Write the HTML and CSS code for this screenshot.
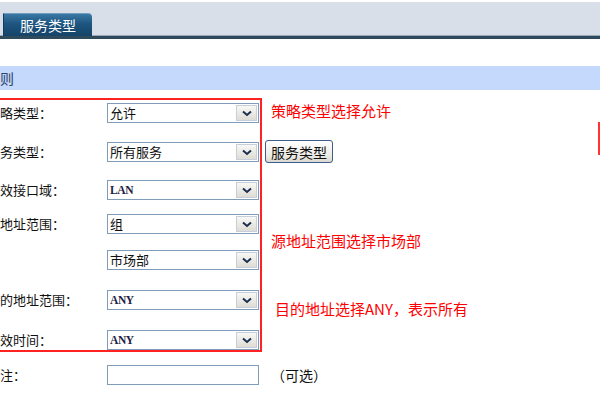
FILE: index.html
```html
<!DOCTYPE html>
<html lang="zh-CN">
<head>
    <meta charset="UTF-8">
    <title>服务类型</title>
    <link rel="stylesheet" href="styles.css">
</head>
<body>
    <div class="topbar">
        <div class="tab">服务类型</div>
    </div>

    <div class="section-title">则</div>

    <div class="form">
        <div class="frame"></div>

        <div class="label row1">略类型：</div>
        <div class="select row1"><span class="value">允许</span><span class="arrow"><svg width="10" height="7" viewBox="0 0 10 7"><path d="M1 1.5 L5 5 L9 1.5" fill="none" stroke="#1c2d52" stroke-width="2"/></svg></span></div>
        <div class="note note1 row1">策略类型选择允许</div>

        <div class="label row2">务类型：</div>
        <div class="select row2"><span class="value">所有服务</span><span class="arrow"><svg width="10" height="7" viewBox="0 0 10 7"><path d="M1 1.5 L5 5 L9 1.5" fill="none" stroke="#1c2d52" stroke-width="2"/></svg></span></div>
        <button class="btn row2">服务类型</button>

        <div class="label row3">效接口域：</div>
        <div class="select row3"><span class="value latin">LAN</span><span class="arrow"><svg width="10" height="7" viewBox="0 0 10 7"><path d="M1 1.5 L5 5 L9 1.5" fill="none" stroke="#1c2d52" stroke-width="2"/></svg></span></div>

        <div class="label row4">地址范围：</div>
        <div class="select row4"><span class="value">组</span><span class="arrow"><svg width="10" height="7" viewBox="0 0 10 7"><path d="M1 1.5 L5 5 L9 1.5" fill="none" stroke="#1c2d52" stroke-width="2"/></svg></span></div>
        <div class="note note2 row4">源地址范围选择市场部</div>

        <div class="select row5"><span class="value">市场部</span><span class="arrow"><svg width="10" height="7" viewBox="0 0 10 7"><path d="M1 1.5 L5 5 L9 1.5" fill="none" stroke="#1c2d52" stroke-width="2"/></svg></span></div>

        <div class="label row6">的地址范围：</div>
        <div class="select row6"><span class="value latin">ANY</span><span class="arrow"><svg width="10" height="7" viewBox="0 0 10 7"><path d="M1 1.5 L5 5 L9 1.5" fill="none" stroke="#1c2d52" stroke-width="2"/></svg></span></div>
        <div class="note note3 row6">目的地址选择ANY，表示所有</div>

        <div class="label row7">效时间：</div>
        <div class="select row7"><span class="value latin">ANY</span><span class="arrow"><svg width="10" height="7" viewBox="0 0 10 7"><path d="M1 1.5 L5 5 L9 1.5" fill="none" stroke="#1c2d52" stroke-width="2"/></svg></span></div>

        <div class="label row8">注：</div>
        <input class="text-input row8" type="text">
        <div class="hint row8">（可选）</div>
    </div>

    <div class="callout"></div>
</body>
</html>
```

FILE: styles.css
```css
body {
    margin: 0;
    font-family: "Noto Sans CJK SC", sans-serif;
    background-color: white;
    overflow: hidden;
}

.topbar {
    margin-top: 2px;
    height: 34px;
    background-color: #d8dfe9;
    border-bottom: 3px solid #2f4a5c;
    box-shadow: 0 -1px 0 #9aa9b6 inset;
    display: flex;
    align-items: flex-end;
}

.tab {
    margin-left: 3px;
    width: 89px;
    height: 23px;
    line-height: 23px;
    text-align: center;
    color: white;
    font-size: 14px;
    background: linear-gradient(#3a77a3, #1d5580 45%, #164468);
    border-top: 1px solid #6f9cc0;
    border-left: 1px solid #123a5a;
    border-radius: 0 4px 0 0;
    box-sizing: border-box;
}

.section-title {
    margin-top: 27px;
    height: 24px;
    line-height: 24px;
    background-color: #c5d9fd;
    color: #2d4268;
    font-size: 14px;
}

.form {
    margin-top: 13px;
    display: grid;
    grid-template-columns: 107px 152px auto;
    grid-template-rows: 39px 38px 34px 36px 40px 40px 35px 20px;
    align-items: start;
}

.frame {
    grid-column: 1 / 3;
    grid-row: 1 / 8;
    align-self: stretch;
    margin: -5px -3px 13px -10px;
    border: 2px solid #f22;
}

.row1 { grid-row: 1; }
.row2 { grid-row: 2; }
.row3 { grid-row: 3; }
.row4 { grid-row: 4; }
.row5 { grid-row: 5; }
.row6 { grid-row: 6; }
.row7 { grid-row: 7; }
.row8 { grid-row: 8; }

.label {
    grid-column: 1;
    height: 20px;
    line-height: 20px;
    font-size: 13px;
    color: #111;
    white-space: nowrap;
}

.select {
    grid-column: 2;
    height: 20px;
    box-sizing: border-box;
    border: 1px solid #7f9db9;
    background-color: white;
    display: flex;
    align-items: center;
    justify-content: space-between;
}

.value {
    padding-left: 2px;
    font-size: 13px;
    line-height: 18px;
    color: #111;
}

.value.latin {
    font-family: "Liberation Serif", serif;
    font-size: 11.5px;
    font-weight: bold;
    letter-spacing: -0.4px;
    color: #1d1d44;
}

.arrow {
    width: 21px;
    height: 16px;
    margin-right: 1px;
    box-sizing: border-box;
    border: 1px solid #c6cfdb;
    background: linear-gradient(#f8f8f5, #dedcd4);
    display: flex;
    align-items: center;
    justify-content: center;
}

.btn {
    grid-column: 3;
    margin: -2px 0 0 6px;
    width: 68px;
    height: 23px;
    padding: 0;
    font-family: "Noto Sans CJK SC", sans-serif;
    font-size: 14px;
    color: #111;
    border: 1px solid #3c5d8e;
    border-radius: 3px;
    background: linear-gradient(#ffffff, #ecebe5 70%, #d9d7cf);
    justify-self: start;
}

.note {
    grid-column: 3;
    height: 20px;
    line-height: 20px;
    font-size: 15px;
    color: #f00;
    white-space: nowrap;
}

.note1 {
    margin: -2px 0 0 12px;
}

.note2 {
    margin: 17px 0 0 12px;
}

.note3 {
    margin: 9px 0 0 16px;
}

.text-input {
    grid-column: 2;
    height: 20px;
    width: 152px;
    margin: 0;
    padding: 0;
    box-sizing: border-box;
    border: 1px solid #7f9db9;
    background-color: white;
}

.hint {
    grid-column: 3;
    margin-left: 12px;
    height: 20px;
    line-height: 20px;
    font-size: 14px;
    color: #111;
    white-space: nowrap;
}

.callout {
    position: absolute;
    left: 598px;
    top: 122px;
    width: 40px;
    height: 29px;
    border: 2px solid #f33;
}
```
